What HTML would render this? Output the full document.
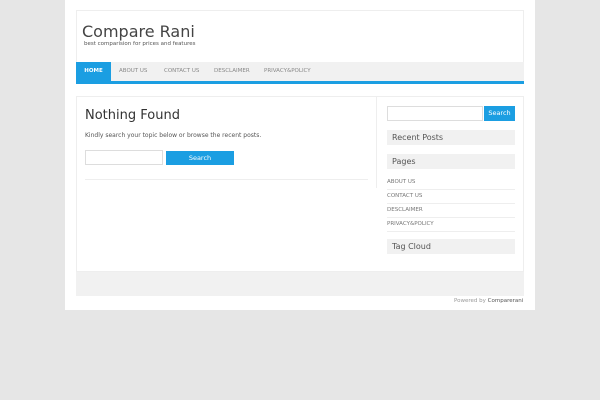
<!DOCTYPE html>
<html><head><style>
*{margin:0;padding:0;box-sizing:border-box}
body{width:600px;height:400px;background:#e6e6e6;font-family:"DejaVu Sans",sans-serif;position:relative;overflow:hidden}
.abs{position:absolute}
.wrap{left:65px;top:0;width:470px;height:310px;background:#fff}
.hdr{left:76px;top:10px;width:448px;height:52px;border:1px solid #eee;border-bottom:none}
.nav{left:76px;top:62px;width:448px;height:22px;background:#f1f1f1;border-bottom:3px solid #1b9ee2}
.nav span{position:absolute;top:0;height:19px;line-height:19px;font-size:5.5px;color:#888}
.box{left:76px;top:96px;width:448px;height:176px;border:1px solid #eee}
.side{left:376px;top:96px;width:1px;height:92px;background:#eee}
.sbh{left:387px;width:128px;height:15px;background:#f1f1f1;font-size:8px;color:#555;padding-left:5px;line-height:15px}
.pl{left:387px;width:128px;font-size:5.5px;color:#777;border-bottom:1px solid #eee;height:14px;line-height:13px}
</style></head><body>
<div class="abs wrap"></div>
<div class="abs hdr"></div>
<div class="abs" style="left:82px;top:22px;font-size:16px;color:#444">Compare Rani</div>
<div class="abs" style="left:84px;top:41px;font-size:5.5px;color:#555">best comparision for prices and features</div>
<div class="abs nav">
<span style="left:0;width:35px;background:#1b9ee2;color:#fff;text-align:center;font-weight:bold">HOME</span>
<span style="left:43px">ABOUT US</span>
<span style="left:88px">CONTACT US</span>
<span style="left:138px">DESCLAIMER</span>
<span style="left:188px">PRIVACY&amp;POLICY</span>
</div>
<div class="abs box"></div>
<div class="abs side"></div>
<div class="abs" style="left:85px;top:108px;font-size:13px;color:#333">Nothing Found</div>
<div class="abs" style="left:85px;top:132px;font-size:6px;color:#555">Kindly search your topic below or browse the recent posts.</div>
<div class="abs" style="left:85px;top:150px;width:78px;height:15px;border:1px solid #ddd"></div>
<div class="abs" style="left:166px;top:151px;width:68px;height:14px;background:#1b9ee2;color:#fff;font-size:6.5px;text-align:center;line-height:14px">Search</div>
<div class="abs" style="left:85px;top:179px;width:283px;height:1px;background:#eee"></div>
<div class="abs" style="left:387px;top:106px;width:96px;height:15px;border:1px solid #ddd"></div>
<div class="abs" style="left:484px;top:106px;width:31px;height:15px;background:#1b9ee2;color:#fff;font-size:6.5px;text-align:center;line-height:15px">Search</div>
<div class="abs sbh" style="top:130px">Recent Posts</div>
<div class="abs sbh" style="top:154px">Pages</div>
<div class="abs pl" style="top:176px">ABOUT US</div>
<div class="abs pl" style="top:190px">CONTACT US</div>
<div class="abs pl" style="top:204px">DESCLAIMER</div>
<div class="abs pl" style="top:218px">PRIVACY&amp;POLICY</div>
<div class="abs sbh" style="top:239px">Tag Cloud</div>
<div class="abs" style="left:76px;top:272px;width:448px;height:24px;background:#f1f1f1"></div>
<div class="abs" style="left:454px;top:298px;font-size:5.5px;color:#999">Powered by <span style="color:#555">Comparerani</span></div>
</body></html>
